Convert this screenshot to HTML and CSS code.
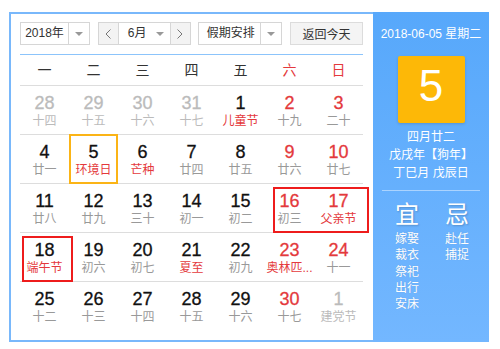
FILE: index.html
```html
<!DOCTYPE html>
<html lang="zh-CN">
<head>
  <meta charset="UTF-8">
  <title>万年历</title>
  <meta name="viewport" content="width=device-width, initial-scale=1.0">
  <link rel="stylesheet" href="styles.css">
</head>
<body>
  <div class="calendar">
    <div class="main">
      <div class="toolbar">
        <div class="select year"><span class="val">2018年</span><span class="drop"><i class="tri"></i></span></div>
        <div class="month-nav">
          <span class="nav"><svg width="6" height="10" viewBox="0 0 6 10"><polyline points="5.5,0.5 1,5 5.5,9.5" fill="none" stroke="#777" stroke-width="1"/></svg></span>
          <div class="select month"><span class="val">6月</span><span class="drop plain"><i class="tri"></i></span></div>
          <span class="nav"><svg width="6" height="10" viewBox="0 0 6 10"><polyline points="0.5,0.5 5,5 0.5,9.5" fill="none" stroke="#777" stroke-width="1"/></svg></span>
        </div>
        <div class="select holiday"><span class="val">假期安排</span><span class="drop"><i class="tri"></i></span></div>
        <button class="today-btn">返回今天</button>
      </div>

      <div class="board">
        <div class="weekdays">
          <span>一</span><span>二</span><span>三</span><span>四</span><span>五</span><span class="red">六</span><span class="red">日</span>
        </div>
        <div class="days">
          <div class="day other"><b>28</b><em>十四</em></div>
          <div class="day other"><b>29</b><em>十五</em></div>
          <div class="day other"><b>30</b><em>十六</em></div>
          <div class="day other"><b>31</b><em>十七</em></div>
          <div class="day fest"><b>1</b><em>儿童节</em></div>
          <div class="day wkd"><b>2</b><em>十九</em></div>
          <div class="day wkd"><b>3</b><em>二十</em></div>

          <div class="day"><b>4</b><em>廿一</em></div>
          <div class="day fest today"><b>5</b><em>环境日</em></div>
          <div class="day fest"><b>6</b><em>芒种</em></div>
          <div class="day"><b>7</b><em>廿四</em></div>
          <div class="day"><b>8</b><em>廿五</em></div>
          <div class="day wkd"><b>9</b><em>廿六</em></div>
          <div class="day wkd"><b>10</b><em>廿七</em></div>

          <div class="day"><b>11</b><em>廿八</em></div>
          <div class="day"><b>12</b><em>廿九</em></div>
          <div class="day"><b>13</b><em>三十</em></div>
          <div class="day"><b>14</b><em>初一</em></div>
          <div class="day"><b>15</b><em>初二</em></div>
          <div class="day wkd"><b>16</b><em>初三</em></div>
          <div class="day wkd fest"><b>17</b><em>父亲节</em></div>

          <div class="day fest"><b>18</b><em>端午节</em></div>
          <div class="day"><b>19</b><em>初六</em></div>
          <div class="day"><b>20</b><em>初七</em></div>
          <div class="day fest"><b>21</b><em>夏至</em></div>
          <div class="day"><b>22</b><em>初九</em></div>
          <div class="day wkd fest"><b>23</b><em title="奥林匹克日">奥林匹...</em></div>
          <div class="day wkd"><b>24</b><em>十一</em></div>

          <div class="day"><b>25</b><em>十二</em></div>
          <div class="day"><b>26</b><em>十三</em></div>
          <div class="day"><b>27</b><em>十四</em></div>
          <div class="day"><b>28</b><em>十五</em></div>
          <div class="day"><b>29</b><em>十六</em></div>
          <div class="day wkd"><b>30</b><em>十七</em></div>
          <div class="day other"><b>1</b><em>建党节</em></div>
        </div>
        <div class="mark mark-a"></div>
        <div class="mark mark-b"></div>
      </div>
    </div>

    <div class="side">
      <div class="side-date">2018-06-05 星期二</div>
      <div class="big-day">5</div>
      <div class="lunar">
        <div>四月廿二</div>
        <div>戊戌年【狗年】</div>
        <div>丁巳月 戊辰日</div>
      </div>
      <div class="rule"></div>
      <div class="yiji">
        <div class="col">
          <div class="head">宜</div>
          <div>嫁娶</div><div>裁衣</div><div>祭祀</div><div>出行</div><div>安床</div>
        </div>
        <div class="col">
          <div class="head">忌</div>
          <div>赴任</div><div>捕捉</div>
        </div>
      </div>
    </div>
  </div>
</body>
</html>
```

FILE: styles.css
```css
body {
  margin: 0;
  background: #fff;
  font-family: "Liberation Sans", "Noto Sans CJK SC", sans-serif;
  color: #222;
}
.calendar {
  display: flex;
  margin: 12px 0 0 9px;
  width: 480px;
  height: 330px;
}
.main {
  width: 364px;
  height: 330px;
  box-sizing: border-box;
  border: 2px solid #79b8fb;
  border-right: none;
  padding: 8px 10px 10px 9px;
}
.toolbar {
  display: flex;
  justify-content: space-between;
  height: 23px;
  margin-bottom: 9px;
  font-size: 12px;
}
.select {
  display: flex;
  height: 23px;
  box-sizing: border-box;
  border: 1px solid #d6d6d6;
  background: #fff;
  color: #333;
}
.select .val {
  flex: 1;
  text-align: center;
  line-height: 21px;
}
.select .drop {
  width: 20px;
  border-left: 1px solid #d6d6d6;
  display: flex;
  align-items: center;
  justify-content: center;
}
.select .drop.plain {
  border-left: none;
}
.tri {
  width: 0;
  height: 0;
  border-left: 4px solid transparent;
  border-right: 4px solid transparent;
  border-top: 4px solid #999;
}
.year {
  width: 70px;
}
.holiday {
  width: 84px;
}
.holiday .val {
  padding-left: 2px;
}
.month-nav {
  display: flex;
  width: 93px;
  height: 23px;
  box-sizing: border-box;
  border: 1px solid #d6d6d6;
}
.month-nav .nav {
  width: 19px;
  background: #f3f3f3;
  display: flex;
  align-items: center;
  justify-content: center;
}
.month-nav .month {
  flex: 1;
  border: none;
  border-left: 1px solid #d6d6d6;
  border-right: 1px solid #d6d6d6;
  height: 21px;
}
.month-nav .month .val {
  padding-left: 6px;
}
.today-btn {
  width: 73px;
  height: 23px;
  padding: 0;
  border: 1px solid #dcdcdc;
  background: #f4f4f4;
  color: #333;
  font-family: inherit;
  font-size: 12px;
}
.board {
  position: relative;
}
.weekdays {
  display: grid;
  grid-template-columns: repeat(7, 49px);
  border-top: 1px solid #8cc4fb;
  border-bottom: 1px solid #ddd;
  height: 30px;
  line-height: 30px;
  text-align: center;
  font-size: 14px;
  color: #333;
}
.red {
  color: #e4393c;
}
.days {
  display: grid;
  grid-template-columns: repeat(7, 49px);
}
.day {
  position: relative;
  height: 48px;
  border-bottom: 1px solid #ddd;
  text-align: center;
}
.day:nth-last-child(-n+7) {
  border-bottom: none;
}
.day b {
  display: block;
  margin-top: 8px;
  font-weight: normal;
  font-size: 18px;
  line-height: 18px;
  color: #111;
  -webkit-text-stroke: 0.3px currentColor;
}
.day em {
  display: block;
  font-style: normal;
  font-size: 12px;
  line-height: 18px;
  color: #999;
  white-space: nowrap;
}
.day.wkd b {
  color: #e4393c;
}
.day.fest em {
  color: #e4393c;
}
.day.other b,
.day.other em {
  color: #bbb;
}
.day.today::after {
  content: '';
  position: absolute;
  top: -1px;
  left: 0;
  width: 49px;
  height: 50px;
  box-sizing: border-box;
  border: 2px solid #fbb416;
}
.mark {
  position: absolute;
  box-sizing: border-box;
  border: 2px solid #ee1c1c;
}
.mark-a {
  left: 253px;
  top: 133px;
  width: 96px;
  height: 46px;
}
.mark-b {
  left: 2px;
  top: 182px;
  width: 51px;
  height: 46px;
}
.side {
  width: 116px;
  height: 330px;
  background: linear-gradient(to bottom, #57a8fb, #73b7ff);
  color: #fff;
  text-align: center;
  font-size: 12px;
}
.side-date {
  margin-top: 14px;
  line-height: 16px;
}
.big-day {
  width: 67px;
  height: 67px;
  margin: 14px auto 0;
  background: #fdb807;
  border-radius: 2px;
  box-shadow: 0 1px 3px rgba(0, 0, 0, 0.15);
  font-size: 44px;
  line-height: 60px;
}
.lunar {
  margin-top: 5px;
  line-height: 18px;
}
.rule {
  margin: 8px 9px 0;
  height: 1px;
  background: rgba(255, 255, 255, 0.45);
}
.yiji {
  display: grid;
  grid-template-columns: 50px 50px;
  padding-left: 9px;
  margin-top: 10px;
}
.col {
  line-height: 16.25px;
  text-shadow: 0 0 1px rgba(0, 0, 0, 0.15);
}
.col .head {
  font-size: 24px;
  line-height: 28px;
  margin-bottom: 2px;
  text-shadow: 1px 1px 2px rgba(0, 0, 0, 0.2);
}
```
